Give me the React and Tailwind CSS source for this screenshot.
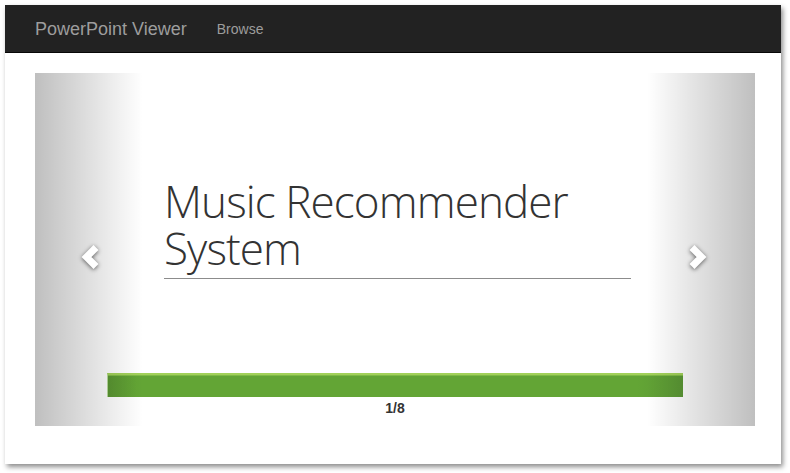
import React from "react";

function Chevron({ dir }) {
  const pts = dir === "left" ? "16,3.5 6.5,13 16,22.5" : "6,3.5 15.5,13 6,22.5";
  return (
    <svg width="22" height="26" viewBox="0 0 22 26" style={{ filter: "drop-shadow(0 1px 2px rgba(0,0,0,0.6))" }}>
      <polyline points={pts} fill="none" stroke="#fff" strokeWidth="7" strokeLinejoin="miter" strokeLinecap="butt" />
    </svg>
  );
}

export default function App() {
  return (
    <div className="w-[790px] h-[473px] bg-white pt-[5px] pl-[5px] overflow-hidden" style={{ fontFamily: '"Liberation Sans", Arial, sans-serif' }}>
      <div className="w-[776px] h-[459px] bg-white shadow-[2px_3px_5px_rgba(0,0,0,0.45)]">
        <nav className="h-[48px] bg-[#222222] border-b border-[#080808] flex items-center pl-[30px]">
          <span className="text-[18px] text-[#9d9d9d] leading-none">PowerPoint Viewer</span>
          <span className="text-[14px] text-[#9d9d9d] leading-none ml-[30px]">Browse</span>
        </nav>
        <div className="pt-[20px] pl-[30px]">
          <div className="relative w-[720px] h-[353px] bg-white">
            <div className="pt-[105px] pl-[129px]">
              <div
                className="text-[#333333] font-light text-[44px] leading-[47px] tracking-[-0.9px]"
                style={{ fontFamily: '"Open Sans", Lato, sans-serif' }}
              >
                <div>Music Recommender</div>
                <div>System</div>
              </div>
              <div className="w-[467px] h-px bg-[#8c8c8c] mt-[6px]" />
            </div>
            <div className="ml-[72px] mt-[94px] w-[576px] h-[24px] border-t-2 border-[#a2d15a] bg-[linear-gradient(to_right,#5a9632_0%,#63a535_5%,#63a535_92%,#5b9835_100%)] border-l border-l-[#b9dc9e]">
              <div className="h-px bg-[#7fba45]" />
            </div>
            <div className="text-center text-[14px] font-bold text-[#333333] mt-[1px] leading-[20px]">1/8</div>

            <div className="absolute left-0 top-0 h-full w-[108px] bg-[linear-gradient(to_right,rgba(0,0,0,0.25),rgba(0,0,0,0))]">
              <div className="absolute left-[45px] top-[171px]">
                <Chevron dir="left" />
              </div>
            </div>
            <div className="absolute right-0 top-0 h-full w-[108px] bg-[linear-gradient(to_left,rgba(0,0,0,0.25),rgba(0,0,0,0))]">
              <div className="absolute right-[47px] top-[171px]">
                <Chevron dir="right" />
              </div>
            </div>
          </div>
        </div>
      </div>
    </div>
  );
}
